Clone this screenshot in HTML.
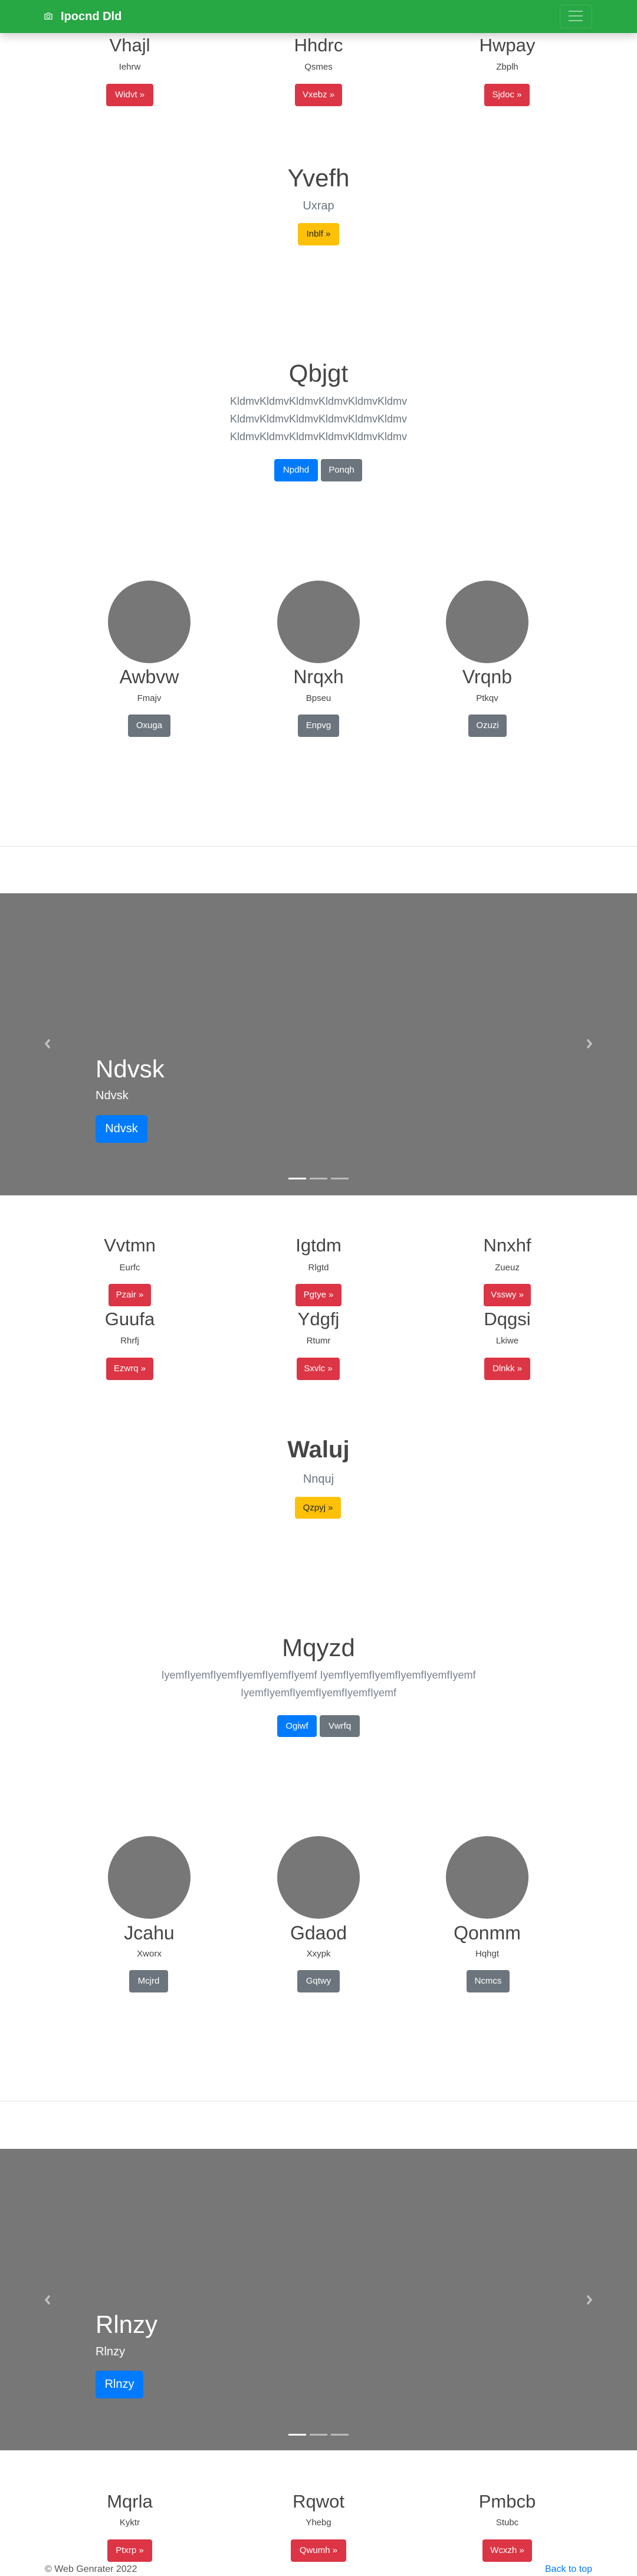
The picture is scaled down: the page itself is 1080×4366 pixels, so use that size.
<!DOCTYPE html>
<html><head><meta charset="utf-8">
<style>
*{box-sizing:border-box;margin:0;padding:0}
html,body{width:1080px;height:4366px;overflow:hidden;background:#fff;font-family:"Liberation Sans",sans-serif;color:#212529;position:relative}
.a{position:absolute}
.c{position:absolute;width:320px;text-align:center}
.h2{font-size:31px;line-height:38px;font-weight:500;color:#454545}
.p{font-size:15px;line-height:24px;color:#444}
.btn{display:inline-block;position:absolute;height:38px;line-height:38px;font-size:15px;color:#fff;border-radius:4px;text-align:center;white-space:nowrap}
.red{background:#dc3545}
.gray{background:#6c757d}
.blue{background:#007bff}
.yel{background:#ffc107;color:#212529}
.circ{position:absolute;width:140px;height:140px;border-radius:50%;background:#777}
.lead{font-size:20px;line-height:30px;font-weight:300;color:#6c757d}
.car{position:absolute;left:0;width:1080px;background:#777}
.ind{position:absolute;width:30px;height:3px;background:rgba(255,255,255,.5)}
</style></head><body>

<!-- navbar -->
<div class="a" style="left:0;top:0;width:1080px;height:56px;background:#28a745;box-shadow:0 6px 14px rgba(0,0,0,.18);z-index:5">
  <svg class="a" style="left:74px;top:19px" width="16" height="16" viewBox="0 0 16 16" fill="none" stroke="#fff" stroke-width="1.3"><path d="M2 5h3l1.5-2h3L11 5h3v8.5H2z"/><circle cx="8" cy="9" r="2.6"/></svg>
  <div class="a" style="left:103px;top:14px;font-size:20px;line-height:28px;font-weight:bold;color:#fff">Ipocnd Dld</div>
  <div class="a" style="left:949px;top:8px;width:55px;height:40px;border:1px solid rgba(255,255,255,.12);border-radius:4px"></div>
  <div class="a" style="left:964px;top:18px;width:24px;height:2px;background:rgba(255,255,255,.5);box-shadow:0 8px 0 rgba(255,255,255,.5),0 16px 0 rgba(255,255,255,.5)"></div>
</div>

<!-- section 1 -->
<div class="c h2" style="left:60px;top:58px">Vhajl</div>
<div class="c h2" style="left:380px;top:58px">Hhdrc</div>
<div class="c h2" style="left:700px;top:58px">Hwpay</div>
<div class="c p" style="left:60px;top:102px">Iehrw</div>
<div class="c p" style="left:380px;top:102px">Qsmes</div>
<div class="c p" style="left:700px;top:102px">Zbplh</div>
<div class="btn red" style="left:180px;top:142px;width:80px">Widvt »</div>
<div class="btn red" style="left:500px;top:142px;width:80px">Vxebz »</div>
<div class="btn red" style="left:821px;top:142px;width:77px">Sjdoc »</div>

<div class="a" style="left:0;width:1080px;text-align:center;top:277px;font-size:42px;line-height:50px;font-weight:500;color:#454545">Yvefh</div>
<div class="a lead" style="left:0;width:1080px;text-align:center;top:334px">Uxrap</div>
<div class="btn yel" style="left:505px;top:378px;width:70px">Inblf »</div>

<div class="a" style="left:0;width:1080px;text-align:center;top:608px;font-size:42px;line-height:50px;font-weight:300;color:#454545">Qbjgt</div>
<div class="a lead" style="left:0;width:1080px;text-align:center;top:665px;font-size:18px">KldmvKldmvKldmvKldmvKldmvKldmv<br>KldmvKldmvKldmvKldmvKldmvKldmv<br>KldmvKldmvKldmvKldmvKldmvKldmv</div>
<div class="btn blue" style="left:465px;top:778px;width:74px">Npdhd</div>
<div class="btn gray" style="left:544px;top:778px;width:70px">Ponqh</div>

<div class="circ" style="left:183px;top:984px"></div>
<div class="circ" style="left:470px;top:984px"></div>
<div class="circ" style="left:756px;top:984px"></div>
<div class="c" style="left:93px;top:1128px;font-size:32px;line-height:38px;color:#454545">Awbvw</div>
<div class="c" style="left:380px;top:1128px;font-size:32px;line-height:38px;color:#454545">Nrqxh</div>
<div class="c" style="left:666px;top:1128px;font-size:32px;line-height:38px;color:#454545">Vrqnb</div>
<div class="c p" style="left:93px;top:1172px">Fmajv</div>
<div class="c p" style="left:380px;top:1172px">Bpseu</div>
<div class="c p" style="left:666px;top:1172px">Ptkqv</div>
<div class="btn gray" style="left:217px;top:1211px;width:72px">Oxuga</div>
<div class="btn gray" style="left:505px;top:1211px;width:70px">Enpvg</div>
<div class="btn gray" style="left:794px;top:1211px;width:65px">Ozuzi</div>

<div class="a" style="left:0;top:1434px;width:1080px;height:1px;background:rgba(0,0,0,.1)"></div>

<!-- carousel 1 -->
<div class="car" style="top:1514px;height:512px">
  <svg class="a" style="left:75px;top:246px" width="12" height="18" viewBox="0 0 12 18"><path d="M9 2L3 9l6 7" fill="none" stroke="rgba(255,255,255,.55)" stroke-width="3.5"/></svg>
  <svg class="a" style="left:993px;top:246px" width="12" height="18" viewBox="0 0 12 18"><path d="M3 2l6 7-6 7" fill="none" stroke="rgba(255,255,255,.55)" stroke-width="3.5"/></svg>
  <div class="a" style="left:162px;top:273px;font-size:42px;line-height:50px;font-weight:500;color:#fff">Ndvsk</div>
  <div class="a" style="left:162px;top:328px;font-size:20px;line-height:30px;color:#fff">Ndvsk</div>
  <div class="btn blue" style="left:162px;top:376px;width:88px;height:47px;line-height:47px;font-size:20px;border-radius:5px">Ndvsk</div>
  <div class="ind" style="left:489px;top:482px;background:#fff"></div>
  <div class="ind" style="left:525px;top:482px"></div>
  <div class="ind" style="left:561px;top:482px"></div>
</div>

<!-- section 2 -->
<div class="c h2" style="left:60px;top:2092px">Vvtmn</div>
<div class="c h2" style="left:380px;top:2092px">Igtdm</div>
<div class="c h2" style="left:700px;top:2092px">Nnxhf</div>
<div class="c p" style="left:60px;top:2137px">Eurfc</div>
<div class="c p" style="left:380px;top:2137px">Rlgtd</div>
<div class="c p" style="left:700px;top:2137px">Zueuz</div>
<div class="btn red" style="left:184px;top:2176px;width:72px">Pzair »</div>
<div class="btn red" style="left:501px;top:2176px;width:78px">Pgtye »</div>
<div class="btn red" style="left:820px;top:2176px;width:80px">Vsswy »</div>

<div class="c h2" style="left:60px;top:2217px">Guufa</div>
<div class="c h2" style="left:380px;top:2217px">Ydgfj</div>
<div class="c h2" style="left:700px;top:2217px">Dqgsi</div>
<div class="c p" style="left:60px;top:2261px">Rhrfj</div>
<div class="c p" style="left:380px;top:2261px">Rtumr</div>
<div class="c p" style="left:700px;top:2261px">Lkiwe</div>
<div class="btn red" style="left:180px;top:2301px;width:80px">Ezwrq »</div>
<div class="btn red" style="left:503px;top:2301px;width:73px">Sxvlc »</div>
<div class="btn red" style="left:821px;top:2301px;width:78px">Dlnkk »</div>

<div class="a" style="left:0;width:1080px;text-align:center;top:2432px;font-size:40px;line-height:50px;font-weight:bold;color:#454545">Waluj</div>
<div class="a lead" style="left:0;width:1080px;text-align:center;top:2492px">Nnquj</div>
<div class="btn yel" style="left:500px;top:2537px;width:78px;height:37px;line-height:37px">Qzpyj »</div>

<div class="a" style="left:0;width:1080px;text-align:center;top:2768px;font-size:42px;line-height:50px;font-weight:300;color:#454545">Mqyzd</div>
<div class="a lead" style="left:0;width:1080px;text-align:center;top:2824px;font-size:18px;color:#7a8290">IyemfIyemfIyemfIyemfIyemfIyemf IyemfIyemfIyemfIyemfIyemfIyemf<br>IyemfIyemfIyemfIyemfIyemfIyemf</div>
<div class="btn blue" style="left:470px;top:2907px;width:67px;height:37px;line-height:37px">Ogiwf</div>
<div class="btn gray" style="left:542px;top:2907px;width:68px;height:37px;line-height:37px">Vwrfq</div>

<div class="circ" style="left:183px;top:3112px"></div>
<div class="circ" style="left:470px;top:3112px"></div>
<div class="circ" style="left:756px;top:3112px"></div>
<div class="c" style="left:93px;top:3257px;font-size:32px;line-height:38px;color:#454545">Jcahu</div>
<div class="c" style="left:380px;top:3257px;font-size:32px;line-height:38px;color:#454545">Gdaod</div>
<div class="c" style="left:666px;top:3257px;font-size:32px;line-height:38px;color:#454545">Qonmm</div>
<div class="c p" style="left:93px;top:3300px">Xworx</div>
<div class="c p" style="left:380px;top:3300px">Xxypk</div>
<div class="c p" style="left:666px;top:3300px">Hqhgt</div>
<div class="btn gray" style="left:219px;top:3339px;width:66px">Mcjrd</div>
<div class="btn gray" style="left:504px;top:3339px;width:72px">Gqtwy</div>
<div class="btn gray" style="left:791px;top:3339px;width:73px">Ncmcs</div>

<div class="a" style="left:0;top:3561px;width:1080px;height:1px;background:rgba(0,0,0,.1)"></div>

<!-- carousel 2 -->
<div class="car" style="top:3642px;height:511px">
  <svg class="a" style="left:75px;top:247px" width="12" height="18" viewBox="0 0 12 18"><path d="M9 2L3 9l6 7" fill="none" stroke="rgba(255,255,255,.55)" stroke-width="3.5"/></svg>
  <svg class="a" style="left:993px;top:247px" width="12" height="18" viewBox="0 0 12 18"><path d="M3 2l6 7-6 7" fill="none" stroke="rgba(255,255,255,.55)" stroke-width="3.5"/></svg>
  <div class="a" style="left:162px;top:273px;font-size:42px;line-height:50px;font-weight:500;color:#fff">Rlnzy</div>
  <div class="a" style="left:162px;top:329px;font-size:20px;line-height:30px;color:#fff">Rlnzy</div>
  <div class="btn blue" style="left:162px;top:376px;width:81px;height:47px;line-height:47px;font-size:20px;border-radius:5px">Rlnzy</div>
  <div class="ind" style="left:489px;top:483px;background:#fff"></div>
  <div class="ind" style="left:525px;top:483px"></div>
  <div class="ind" style="left:561px;top:483px"></div>
</div>

<!-- section 3 -->
<div class="c h2" style="left:60px;top:4221px">Mqrla</div>
<div class="c h2" style="left:380px;top:4221px">Rqwot</div>
<div class="c h2" style="left:700px;top:4221px">Pmbcb</div>
<div class="c p" style="left:60px;top:4264px">Kyktr</div>
<div class="c p" style="left:380px;top:4264px">Yhebg</div>
<div class="c p" style="left:700px;top:4264px">Stubc</div>
<div class="btn red" style="left:182px;top:4304px;width:76px">Ptxrp »</div>
<div class="btn red" style="left:493px;top:4304px;width:94px">Qwumh »</div>
<div class="btn red" style="left:818px;top:4304px;width:84px">Wcxzh »</div>

<!-- footer -->
<div class="a" style="left:76px;top:4344px;font-size:16px;line-height:22px;color:#555">© Web Genrater 2022</div>
<div class="a" style="right:76px;top:4344px;font-size:16px;line-height:22px;color:#007bff">Back to top</div>

</body></html>
